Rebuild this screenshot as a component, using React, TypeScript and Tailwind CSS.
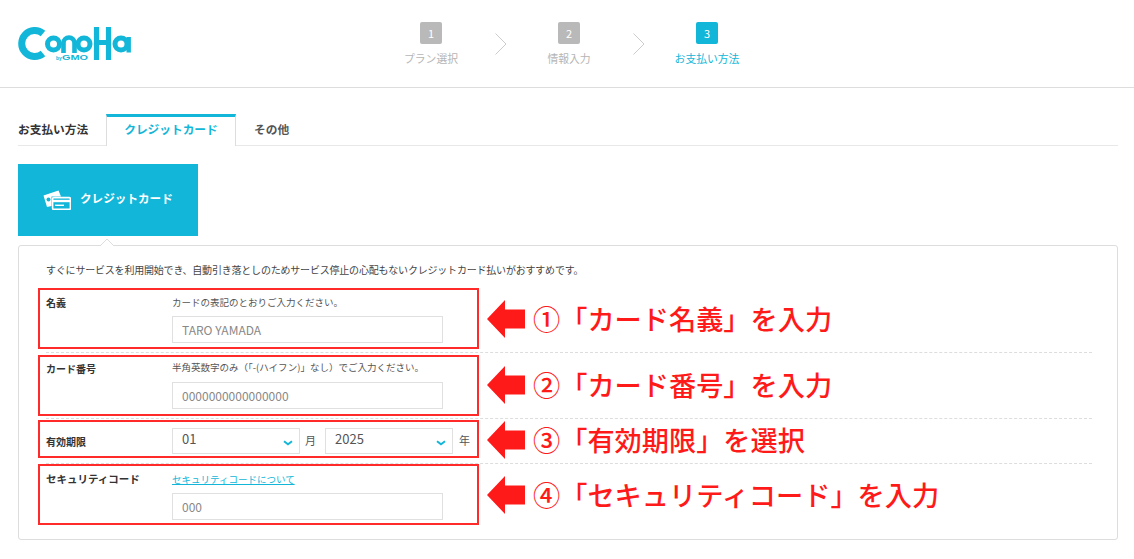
import React from "react";

const FONT = '"Noto Sans CJK JP", "Noto Sans", sans-serif';

const Logo = () => (
  <svg width="113" height="34" viewBox="0 0 113 34" fill="none" className="block">
    <path d="M25 6.5 A13 13 0 1 0 25 26.5" stroke="#12b6d8" strokeWidth="7" />
    <circle cx="35.5" cy="17" r="6" stroke="#12b6d8" strokeWidth="5" />
    <path d="M45.5 26V16a5.5 5.5 0 0 1 11 0V26" stroke="#12b6d8" strokeWidth="4.6" />
    <circle cx="66" cy="17" r="6" stroke="#12b6d8" strokeWidth="5" />
    <path d="M78.5 0V33M90.5 0V33M78.5 15.5H90.5" stroke="#12b6d8" strokeWidth="5.2" />
    <circle cx="103" cy="17" r="6" stroke="#12b6d8" strokeWidth="5" />
    <path d="M110.7 10V25.5" stroke="#12b6d8" strokeWidth="4.4" />
    <rect x="37" y="26" width="36" height="8" fill="#fff" />
    <text x="38" y="33" fontSize="5" fill="#12b6d8" fontFamily="Liberation Sans" fontWeight="700">by</text>
    <text x="44" y="33" fontSize="7.5" fill="#12b6d8" fontFamily="Liberation Sans" fontWeight="700" textLength="26" lengthAdjust="spacingAndGlyphs">GMO</text>
  </svg>
);

const Step = ({ n, label, active }: { n: number; label: string; active?: boolean }) => (
  <div className="flex w-[90px] flex-col items-center">
    <div
      className={
        "flex h-[22px] w-[22px] items-center justify-center rounded-[2px] text-[11px] text-white " +
        (active ? "bg-[#12b6d8]" : "bg-[#b9b9b9]")
      }
    >
      {n}
    </div>
    <p className={"mt-[6px] text-[10.8px] leading-[16px] whitespace-nowrap " + (active ? "text-[#12b6d8]" : "text-[#b5b5b5]")}>
      {label}
    </p>
  </div>
);

const StepArrow = () => (
  <svg width="12" height="22" viewBox="0 0 12 22" fill="none" className="mt-[11px]">
    <path d="M0.5 0.5L11 11L0.5 21.5" stroke="#cccccc" strokeWidth="1" />
  </svg>
);

const CardIcon = () => (
  <svg width="28" height="20" viewBox="0 0 28 20" className="block">
    <path d="M0.5 5.5L15.5 0.5L18 6.5H8.5V16L4 17z" fill="#fff" />
    <circle cx="5.5" cy="9.5" r="2" fill="#12b6d8" />
    <rect x="9.6" y="7.6" width="17.8" height="11.8" rx="1.2" fill="#12b6d8" stroke="#fff" strokeWidth="1.6" />
    <rect x="9.6" y="9.8" width="17.8" height="2.4" fill="#fff" />
    <rect x="12" y="14.6" width="9" height="1.4" fill="#fff" />
  </svg>
);

const Chevron = () => (
  <svg width="10" height="6" viewBox="0 0 10 6" fill="none" className="pointer-events-none absolute right-[7px] top-[12px]">
    <path d="M1 1.2L5 4.2L9 1.2" stroke="#12b6d8" strokeWidth="2" />
  </svg>
);

// red callout drawn over a form row
const Callout = ({ boxTop, boxHeight, arrowTop, text }: { boxTop: number; boxHeight: number; arrowTop: number; text: string }) => (
  <>
    <div
      className="pointer-events-none absolute left-[-8px] w-[441px] border-2 border-[#ff2a2a]"
      style={{ top: boxTop, height: boxHeight }}
    />
    <svg
      width="38"
      height="38"
      viewBox="0 0 38 38"
      className="absolute left-[441px]"
      style={{ top: arrowTop }}
    >
      <path d="M0 19L18 0V9.5H38V28.5H18V38z" fill="#ff1a1a" />
    </svg>
    <p
      className="absolute left-[487px] text-[27.2px] leading-[38px] font-medium whitespace-nowrap text-[#ff1a1a]"
      style={{ top: arrowTop - 1 }}
    >
      {text}
    </p>
  </>
);

const TextField = ({ placeholder }: { placeholder: string }) => (
  <input
    placeholder={placeholder}
    className="block h-[27px] w-[271px] border border-[#e0e0e0] bg-white px-[9px] text-[12px] placeholder:text-[#888888]"
  />
);

const Select = ({ value }: { value: string }) => (
  <div className="relative h-[26px] w-[128px] shrink-0">
    <select className="block h-[26px] w-full appearance-none border border-[#e0e0e0] bg-white py-0 pb-[4px] pl-[9px] text-[13px] leading-[20px] text-[#555555]">
      <option>{value}</option>
    </select>
    <Chevron />
  </div>
);

export default function App() {
  return (
    <div className="min-h-[559px] bg-white text-[#333333]" style={{ fontFamily: FONT }}>
      <header className="flex h-[88px] border-b border-[#dddddd]">
        <div className="ml-[18px] mt-[27px]">
          <Logo />
        </div>
        <div className="ml-[255px] mt-[22px] flex h-[54px] items-start">
          <Step n={1} label="プラン選択" />
          <div className="ml-[19px] mr-[17px]"><StepArrow /></div>
          <Step n={2} label="情報入力" />
          <div className="ml-[19px] mr-[17px]"><StepArrow /></div>
          <Step n={3} label="お支払い方法" active />
        </div>
      </header>

      <main className="pl-[18px] pr-[16px]">
        <div className="mt-[26px] flex h-[32px] items-stretch border-b border-[#e8e8e8]">
          <p className="w-[88px] pt-[6px] text-[11.7px] leading-[18px] font-bold whitespace-nowrap">お支払い方法</p>
          <div className="-mb-px w-[130px] border-x border-t-[3px] border-x-[#dddddd] border-t-[#12b6d8] bg-white pt-[3px] text-center text-[11.7px] leading-[18px] font-bold text-[#12b6d8]">
            クレジットカード
          </div>
          <p className="pl-[18px] pt-[6px] text-[11.7px] leading-[18px] font-bold text-[#555555]">その他</p>
        </div>

        <div className="mt-[18px] flex h-[72px] w-[180px] items-center gap-[9px] bg-[#12b6d8] pl-[25px] pb-[1px]">
          <CardIcon />
          <span className="-mt-[2px] text-[11.6px] font-bold whitespace-nowrap text-white">クレジットカード</span>
        </div>

        <section className="relative mt-[9px] h-[295px] rounded-[3px] border border-[#dddddd] pl-[27px] pr-[25px]">
          <svg width="14" height="7" viewBox="0 0 14 7" className="absolute left-[81px] top-[-7px]">
            <path d="M0 7L7 0L14 7" fill="#fff" stroke="#dddddd" strokeWidth="1" />
          </svg>
          <p className="mt-[17px] text-[10px] leading-[14px] tracking-[-0.2px] text-[#444444] whitespace-nowrap">
            すぐにサービスを利用開始でき、自動引き落としのためサービス停止の心配もないクレジットカード払いがおすすめです。
          </p>

          <div className="relative mt-[8px] h-[68px] border-b border-dashed border-[#dddddd] pt-[9px]">
            <Callout boxTop={3} boxHeight={61} arrowTop={15} text="①「カード名義」を入力" />
            <div className="flex">
              <p className="w-[126px] pt-[1px] text-[10px] leading-[16px] font-bold">名義</p>
              <div>
                <p className="text-[9.5px] leading-[16px] text-[#555555]">カードの表記のとおりご入力ください。</p>
                <div className="mt-[6px]"><TextField placeholder="TARO YAMADA" /></div>
              </div>
            </div>
          </div>

          <div className="relative h-[66px] border-b border-dashed border-[#dddddd] pt-[6px]">
            <Callout boxTop={2} boxHeight={61} arrowTop={13} text="②「カード番号」を入力" />
            <div className="flex">
              <p className="w-[126px] pt-[2px] text-[10px] leading-[16px] font-bold">カード番号</p>
              <div>
                <p className="text-[9.5px] leading-[16px] text-[#555555]">半角英数字のみ（「-(ハイフン)」なし）でご入力ください。</p>
                <div className="mt-[7px]"><TextField placeholder="0000000000000000" /></div>
              </div>
            </div>
          </div>

          <div className="relative h-[45px] border-b border-dashed border-[#dddddd] pt-[9px]">
            <Callout boxTop={1} boxHeight={38} arrowTop={2} text="③「有効期限」を選択" />
            <div className="flex items-start">
              <p className="w-[126px] pt-[6px] text-[10px] leading-[16px] font-bold">有効期限</p>
              <Select value="01" />
              <span className="ml-[5px] w-[20px] pt-[4px] text-[11px] leading-[16px] text-[#555555]">月</span>
              <Select value="2025" />
              <span className="ml-[6px] pt-[4px] text-[11px] leading-[16px] text-[#555555]">年</span>
            </div>
          </div>

          <div className="relative pt-[7px]">
            <Callout boxTop={0} boxHeight={61} arrowTop={12} text="④「セキュリティコード」を入力" />
            <div className="flex">
              <p className="w-[126px] text-[10.5px] leading-[16px] font-bold whitespace-nowrap">セキュリティコード</p>
              <div>
                <a className="block text-[9.5px] leading-[16px] text-[#12b6d8] underline">セキュリティコードについて</a>
                <div className="mt-[6px]"><TextField placeholder="000" /></div>
              </div>
            </div>
          </div>
        </section>
      </main>
    </div>
  );
}
